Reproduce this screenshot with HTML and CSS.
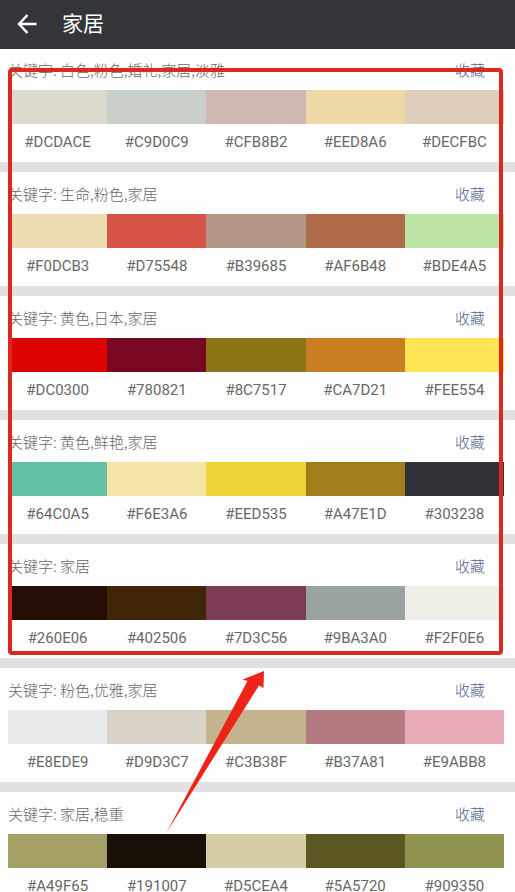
FILE: index.html
```
<!DOCTYPE html>
<html lang="zh-CN">
<head>
<meta charset="utf-8">
<meta name="viewport" content="width=device-width, initial-scale=1">
<title>家居</title>
<link rel="stylesheet" href="styles.css">
</head>
<body>
<header class="topbar">
  <button class="back" type="button" aria-label="返回">
    <svg viewBox="0 0 20 20" width="20" height="20" aria-hidden="true"><path d="M10.500 1 2 10l8.500 9M2 10H19.500"/></svg>
  </button>
  <h1 class="title">家居</h1>
</header>
<main class="list" id="list"></main>
<div class="frame"></div>
<svg class="arrow" viewBox="0 0 100 164" width="100" height="164" aria-hidden="true">
  <path d="M0.500 162.500 81.500 11l-5-1.500L98 1 97.500 18l-4.500-2.500z"/>
</svg>
<script src="script.js"></script>
</body>
</html>
```
FILE: styles.css
```
* {
  box-sizing: border-box;
}

body {
  margin: 0;
  position: relative;
  background: #fefefe;
  color: #686868;
  font: 15px/20px Roboto, "Noto Sans CJK SC", sans-serif;
}

.topbar {
  position: relative;
  z-index: 1;
  display: flex;
  align-items: center;
  gap: 24px;
  height: 49px;
  padding: 0 17px 2px;
  background: #343538;
  color: #fff;
}

.back {
  display: flex;
  padding: 0;
  border: 0;
  background: none;
  color: inherit;
}

.back svg {
  fill: none;
  stroke: currentColor;
  stroke-width: 2.5;
}

.title {
  margin: 0;
  padding-left: 1px;
  font-size: 21px;
  font-weight: 400;
  line-height: 28px;
}

.list {
  margin-top: -1px;
}

.card {
  border-bottom: 10px solid #e1e1e1;
}

.card-head {
  display: flex;
  justify-content: space-between;
  height: 42px;
  padding: 12px 30px 0 8px;
}

.keywords {
  margin: 0;
  font-family: "Noto Sans CJK SC", sans-serif;
  font-weight: 300;
}

.save {
  height: 20px;
  padding: 0;
  border: 0;
  background: none;
  color: #52658f;
  font: inherit;
  font-family: "Noto Sans CJK SC", sans-serif;
  font-weight: 300;
}

.palette {
  display: grid;
  grid-template-columns: repeat(5, 1fr);
  margin: 0;
  padding: 0 11px 14px 8px;
  list-style: none;
}

.card:last-child {
  border-bottom: 0;
}

.card:last-child .palette {
  padding-bottom: 0;
}

.color {
  line-height: 12px;
  text-align: center;
}

.swatch {
  display: block;
  height: 34px;
  margin-bottom: 12px;
}

.frame {
  position: absolute;
  z-index: 2;
  top: 68px;
  left: 8px;
  right: 12px;
  height: 587px;
  border: 4px solid #dc281e;
  border-radius: 4px;
  pointer-events: none;
}

.arrow {
  position: absolute;
  z-index: 2;
  top: 670px;
  left: 166px;
  fill: #ee2418;
  pointer-events: none;
}
```
FILE: script.js
```
const palettes = [
  ["白色,粉色,婚礼,家居,淡雅", "DCDACE C9D0C9 CFB8B2 EED8A6 DECFBC"],
  ["生命,粉色,家居", "F0DCB3 D75548 B39685 AF6B48 BDE4A5"],
  ["黄色,日本,家居", "DC0300 780821 8C7517 CA7D21 FEE554"],
  ["黄色,鲜艳,家居", "64C0A5 F6E3A6 EED535 A47E1D 303238"],
  ["家居", "260E06 402506 7D3C56 9BA3A0 F2F0E6"],
  ["粉色,优雅,家居", "E8EDE9 D9D3C7 C3B38F B37A81 E9ABB8"],
  ["家居,稳重", "A49F65 191007 D5CEA4 5A5720 909350"]
];

// Swatches painted in a shade other than their code.
const shades = { E8EDE9: "E8E9EB", F2F0E6: "EFEFE7" };

document.getElementById("list").innerHTML = palettes.map(([words, codes]) => `
  <section class="card">
    <div class="card-head">
      <p class="keywords">关键字: ${words}</p>
      <button class="save" type="button">收藏</button>
    </div>
    <ul class="palette">
      ${codes.split(" ").map(code => `<li class="color"><span class="swatch" style="background:#${shades[code] || code}"></span>#${code}</li>`).join("")}
    </ul>
  </section>`).join("");
```
